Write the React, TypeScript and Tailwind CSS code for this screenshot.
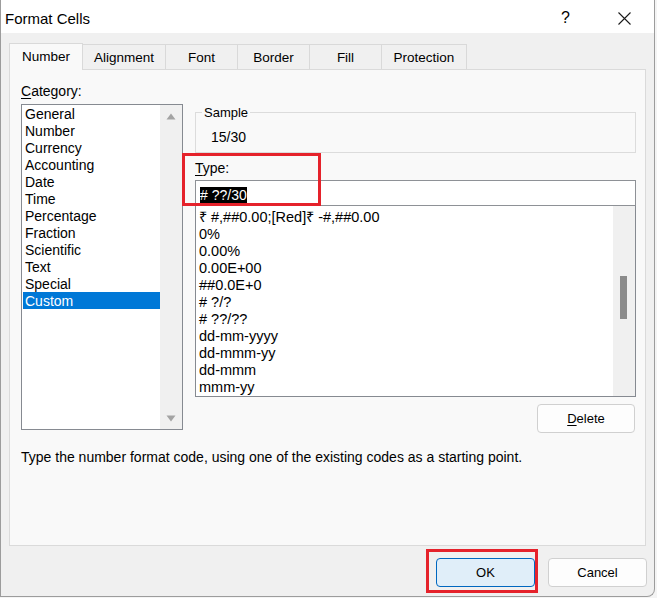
import React from 'react';

const CATEGORIES = [
  'General',
  'Number',
  'Currency',
  'Accounting',
  'Date',
  'Time',
  'Percentage',
  'Fraction',
  'Scientific',
  'Text',
  'Special',
  'Custom',
];

const FORMATS = [
  '₹ #,##0.00;[Red]₹ -#,##0.00',
  '0%',
  '0.00%',
  '0.00E+00',
  '##0.0E+0',
  '# ?/?',
  '# ??/??',
  'dd-mm-yyyy',
  'dd-mmm-yy',
  'dd-mmm',
  'mmm-yy',
];

const TABS = [
  { label: 'Alignment', cls: 'w-[83px]' },
  { label: 'Font', cls: 'w-[72px]' },
  { label: 'Border', cls: 'w-[72px]' },
  { label: 'Fill', cls: 'w-[72px]' },
  { label: 'Protection', cls: 'w-[85px]' },
];

const Triangle: React.FC<{ down?: boolean }> = ({ down }) => (
  <svg width="10" height="7" viewBox="0 0 10 7">
    {down ? <polygon points="0.5,0.5 9.5,0.5 5,6.5" fill="#a3a3a3" /> : <polygon points="5,0.5 9.5,6.5 0.5,6.5" fill="#a3a3a3" />}
  </svg>
);

const App: React.FC = () => {
  return (
    <div className="w-[657px] h-[598px] bg-[#f4f4f4] font-['Liberation_Sans',Arial,sans-serif] text-black overflow-hidden">
      <div className="w-[655px] h-[597px] bg-[#f0f0f0] border-l border-r border-b border-[#9c9c9c] rounded-br-[8px] flex flex-col overflow-hidden">
        {/* title bar */}
        <div className="h-[33px] bg-white flex items-center pl-[4px] pt-[3px] shrink-0">
          <span className="text-[15px] leading-none">Format Cells</span>
          <span className="ml-auto text-[16px] leading-none mr-[48px]">?</span>
          <svg width="13" height="13" viewBox="0 0 13 13" className="mr-[23px]">
            <path d="M0.5 0.5 L12.5 12.5 M12.5 0.5 L0.5 12.5" stroke="#1a1a1a" strokeWidth="1.1" />
          </svg>
        </div>

        <div className="flex flex-col pl-[8px] pr-[8px] pt-[10px]">
          {/* tabs */}
          <div className="flex items-end h-[26px]">
            <div className="relative z-10 -mb-px h-[27px] w-[74px] border border-b-0 border-[#d9d9d9] bg-[#f9f9f9] flex items-center justify-center text-[13.5px] pt-[1px]">
              Number
            </div>
            {TABS.map((t) => (
              <div
                key={t.label}
                className={`${t.cls} h-[25px] border-t border-r border-[#d9d9d9] bg-[#f0f0f0] flex items-center justify-center text-[13.5px] pt-[2px]`}
              >
                {t.label}
              </div>
            ))}
          </div>

          {/* panel */}
          <div className="h-[477px] border border-[#dadada] bg-[#f9f9f9] pl-[11px] pt-[13px] flex flex-col">
            <div className="flex gap-[12px]">
              {/* category column */}
              <div className="w-[162px] flex flex-col">
                <div className="text-[14px] leading-[17px]">
                  <u className="underline-offset-2">C</u>ategory:
                </div>
                <div className="mt-[4px] h-[326px] border border-[#868a91] bg-white flex">
                  <div className="flex-1 pl-px">
                    {CATEGORIES.map((c) => (
                      <div
                        key={c}
                        className={`h-[17px] leading-[17px] pt-px text-[14px] pl-[2px] overflow-visible ${c === 'Custom' ? 'bg-[#0078d7] text-white' : ''}`}
                      >
                        <div className="h-[16px] leading-[17px]">{c}</div>
                      </div>
                    ))}
                  </div>
                  <div className="w-[22px] bg-[#f0f0f0] flex flex-col items-center justify-between pt-[8px] pb-[7px]">
                    <Triangle />
                    <Triangle down />
                  </div>
                </div>
              </div>

              {/* right column */}
              <div className="w-[441px] flex flex-col">
                <fieldset className="mt-[21px] h-[49px] border border-[#dcdcdc] px-[6px]">
                  <legend className="px-[2px] text-[13px] leading-[17px]">Sample</legend>
                  <div className="mt-[8px] ml-[9px] text-[14px] leading-[17px]">15/30</div>
                </fieldset>

                <div className="relative flex flex-col">
                  <div className="mt-[7px] text-[14px] leading-[17px]">
                    <u className="underline-offset-2">T</u>ype:
                  </div>
                  <div className="mt-[3px] h-[26px] border border-[#8e9196] bg-white pl-[4px] pt-[2px]">
                    <span className="bg-black text-white text-[14px] leading-[17px] inline-block h-[17px]"># ??/30</span>
                  </div>
                  <div className="absolute left-[-13px] top-0 w-[139px] h-[53px] border-[3px] border-[#e5222b] pointer-events-none" />
                </div>

                <div className="h-[191px] border-x border-b border-[#868a91] bg-white flex overflow-hidden">
                  <div className="flex-1 pl-[3px] pt-[3px]">
                    {FORMATS.map((f) => (
                      <div key={f} className="h-[17px] leading-[17px] text-[14.5px] whitespace-nowrap">
                        {f}
                      </div>
                    ))}
                  </div>
                  <div className="w-[22px] bg-[#f0f0f0] pt-[70px] flex justify-center">
                    <div className="ml-[-2px] w-[7px] h-[43px] bg-[#8b8b8b]" />
                  </div>
                </div>

                <div className="mt-[7px] flex justify-end pr-px">
                  <button className="w-[98px] h-[29px] rounded-[4px] border border-[#d0d0d0] bg-[#fdfdfd] text-[13px]">
                    <u className="underline-offset-2">D</u>elete
                  </button>
                </div>
              </div>
            </div>

            <div className="mt-[16px] text-[14px] leading-[17px]">
              Type the number format code, using one of the existing codes as a starting point.
            </div>
          </div>

          {/* footer buttons */}
          <div className="mt-[12px] flex justify-end gap-[13px] -mr-px">
            <div className="relative">
              <button className="w-[99px] h-[29px] rounded-[4px] border border-[#0067c0] bg-[#e0eef9] text-[13px]">OK</button>
              <div className="absolute left-[-10px] right-[-3px] top-[-9px] bottom-[-6px] border-[3px] border-[#e5222b] pointer-events-none" />
            </div>
            <button className="w-[99px] h-[29px] rounded-[4px] border border-[#d0d0d0] bg-[#fdfdfd] text-[13px]">Cancel</button>
          </div>
        </div>
      </div>
    </div>
  );
};

export default App;
